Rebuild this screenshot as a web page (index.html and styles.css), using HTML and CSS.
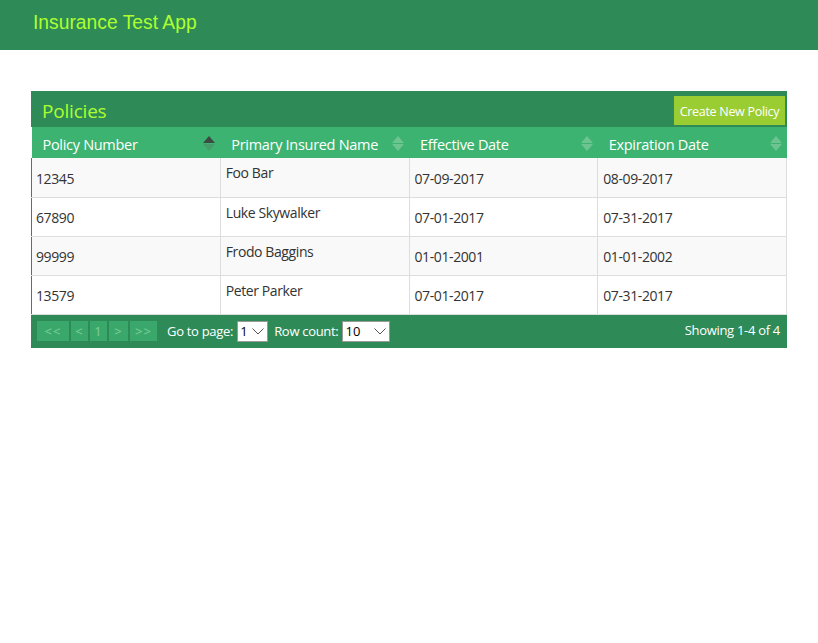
FILE: index.html
```html
<!DOCTYPE html>
<html>
<head>
<meta charset="utf-8">
<link rel="stylesheet" href="styles.css">
</head>
<body>
<header class="topbar"><span class="brand">Insurance Test App</span></header>
<main class="content">
  <section class="panel">
    <div class="panel-head">
      <h2 class="panel-title">Policies</h2>
      <button class="btn-create">Create New Policy</button>
    </div>
    <table class="grid">
      <thead>
        <tr>
          <th><div class="th-in"><span>Policy Number</span><span class="sort asc"><i class="up"></i><i class="down"></i></span></div></th>
          <th><div class="th-in"><span>Primary Insured Name</span><span class="sort"><i class="up"></i><i class="down"></i></span></div></th>
          <th><div class="th-in"><span>Effective Date</span><span class="sort"><i class="up"></i><i class="down"></i></span></div></th>
          <th><div class="th-in"><span>Expiration Date</span><span class="sort"><i class="up"></i><i class="down"></i></span></div></th>
        </tr>
      </thead>
      <tbody>
        <tr class="odd"><td>12345</td><td class="name">Foo Bar</td><td>07-09-2017</td><td>08-09-2017</td></tr>
        <tr><td>67890</td><td class="name">Luke Skywalker</td><td>07-01-2017</td><td>07-31-2017</td></tr>
        <tr class="odd"><td>99999</td><td class="name">Frodo Baggins</td><td>01-01-2001</td><td>01-01-2002</td></tr>
        <tr><td>13579</td><td class="name">Peter Parker</td><td>07-01-2017</td><td>07-31-2017</td></tr>
      </tbody>
    </table>
    <div class="pager">
      <div class="pager-left">
        <span class="pbtn w32">&lt;&lt;</span>
        <span class="pbtn w17">&lt;</span>
        <span class="pbtn w17">1</span>
        <span class="pbtn w20">&gt;</span>
        <span class="pbtn w28">&gt;&gt;</span>
        <span class="plabel goto">Go to page:</span>
        <span class="sel s-page">1<svg class="chev" width="12" height="7" viewBox="0 0 12 7"><path d="M0.5 0.5 L6 6 L11.5 0.5" fill="none" stroke="#555" stroke-width="1"/></svg></span>
        <span class="plabel">Row count:</span>
        <span class="sel s-rows">10<svg class="chev" width="12" height="7" viewBox="0 0 12 7"><path d="M0.5 0.5 L6 6 L11.5 0.5" fill="none" stroke="#555" stroke-width="1"/></svg></span>
      </div>
      <span class="showing">Showing 1-4 of 4</span>
    </div>
  </section>
</main>
</body>
</html>
```
FILE: styles.css
```css
html, body {
  margin: 0;
  padding: 0;
  background: #fff;
}
body {
  font-family: "Open Sans", "Noto Sans", sans-serif;
  color: #333;
}
.topbar {
  height: 50px;
  background: #2e8b57;
  display: flex;
  align-items: center;
  padding-left: 33px;
}
.brand {
  font-family: "Liberation Sans", Arial, sans-serif;
  font-size: 19.3px;
  color: #adff2f;
  margin-top: -4px;
}
.content {
  padding: 41px 31px 0 31px;
}
.panel {
  width: 756px;
}
.panel-head {
  height: 36px;
  background: #2e8b57;
  display: flex;
  align-items: center;
  justify-content: space-between;
  padding: 0 2px 0 11px;
}
.panel-title {
  margin: 3px 0 0 0;
  font-weight: normal;
  font-size: 19px;
  color: #adff2f;
  letter-spacing: -0.2px;
}
.btn-create {
  border: 0;
  background: #9acd32;
  color: #fff;
  font-family: "Open Sans", sans-serif;
  font-size: 12.5px;
  height: 29px;
  width: 111px;
  padding: 2px 0 0 0;
  margin-top: 3px;
  letter-spacing: -0.3px;
}
.grid {
  width: 756px;
  border-collapse: collapse;
  table-layout: fixed;
}
.grid th {
  background: #3cb371;
  color: #fff;
  font-weight: normal;
  font-size: 14.5px;
  text-align: left;
  height: 31px;
  padding: 0;
  letter-spacing: -0.3px;
}
.th-in {
  display: flex;
  align-items: center;
  justify-content: space-between;
  padding: 4px 5px 0 11px;
}
.sort {
  display: flex;
  flex-direction: column;
  gap: 1px;
  margin-top: -3px;
}
.sort i {
  display: block;
  width: 0;
  height: 0;
  border-left: 6px solid transparent;
  border-right: 6px solid transparent;
}
.sort .up {
  border-bottom: 7px solid rgba(150, 210, 170, 0.55);
}
.sort .down {
  border-top: 7px solid rgba(150, 210, 170, 0.55);
}
.sort.asc .up {
  border-bottom-color: #3d4a43;
}
.sort.asc .down {
  border-top-color: rgba(80, 130, 100, 0.45);
}
.grid tbody tr {
  height: 39px;
}
.grid td {
  padding: 3px 0 0 5px;
  border: 1px solid #ddd;
  font-size: 14px;
  line-height: 18px;
  letter-spacing: -0.4px;
  vertical-align: middle;
}
.grid td:first-child {
  border-left: 1px solid #2e8b57;
  padding-left: 4px;
}
.grid td.name {
  vertical-align: top;
  padding-top: 6px;
}
.grid tr.odd td {
  background: #f9f9f9;
}
.grid tbody tr:first-child td {
  border-top: 0;
}
.pager {
  height: 33px;
  background: #2e8b57;
  display: flex;
  align-items: center;
  justify-content: space-between;
  padding: 0 7px 0 6px;
}
.pager-left {
  display: flex;
  align-items: center;
  gap: 2px;
}
.pbtn {
  height: 20px;
  background: #3aa86a;
  color: #7fcf9a;
  font-size: 13px;
  display: flex;
  align-items: center;
  justify-content: center;
  letter-spacing: 1px;
}
.w32 { width: 32px; }
.w17 { width: 17px; }
.w20 { width: 19px; }
.w28 { width: 27px; }
.plabel {
  color: #fff;
  font-size: 13px;
  letter-spacing: -0.3px;
  margin: 0 2px 0 4px;
}
.plabel.goto {
  margin-left: 8px;
}
.sel {
  height: 19px;
  background: #fff;
  border: 1px solid #999;
  font-size: 13px;
  color: #000;
  display: flex;
  align-items: center;
  justify-content: space-between;
  padding: 0 3px 0 2px;
  box-sizing: content-box;
}
.s-page { width: 24px; }
.s-rows { width: 41px; }
.chev {
  display: block;
}
.showing {
  color: #fff;
  font-size: 13px;
  letter-spacing: -0.3px;
  margin-top: -2px;
}
```
